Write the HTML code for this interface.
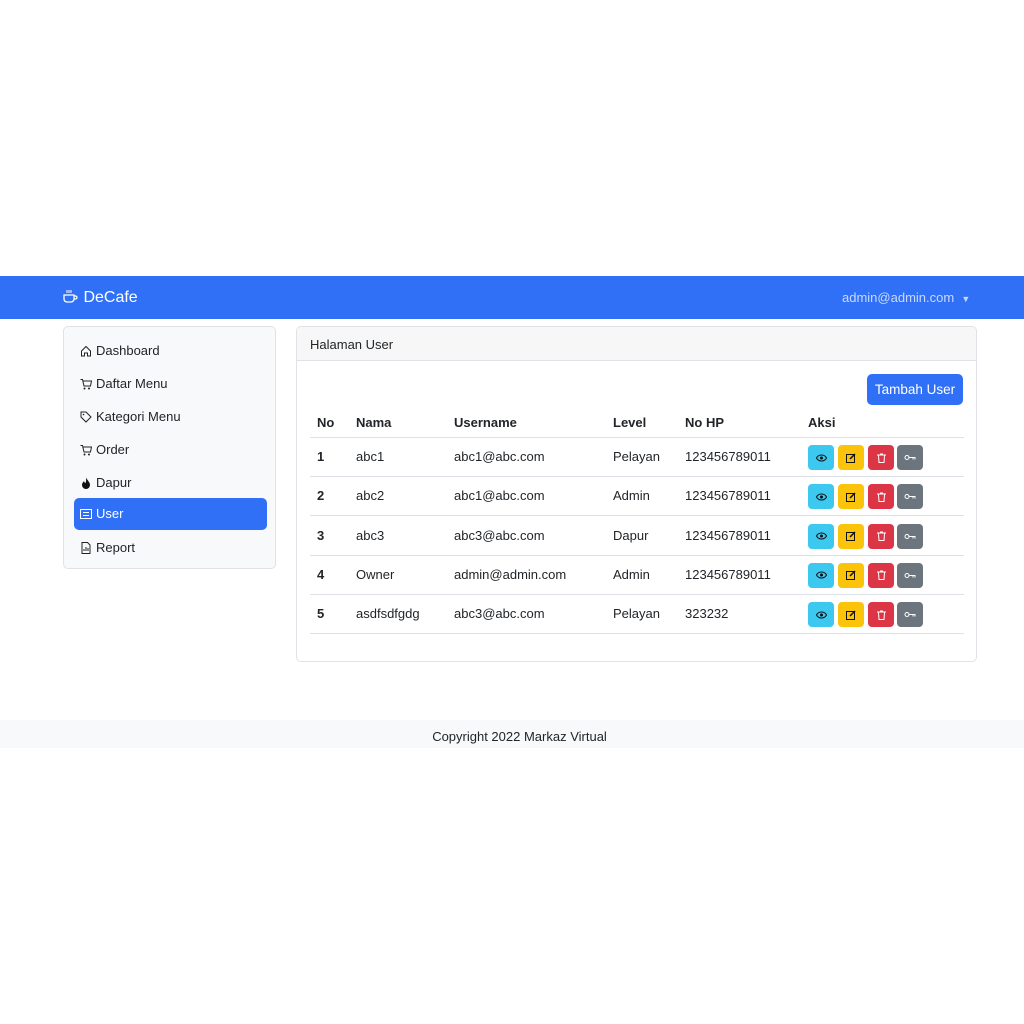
<!DOCTYPE html>
<html><head><style>
*{box-sizing:border-box;margin:0;padding:0}
body{width:1024px;height:1024px;background:#fff;font-family:"Liberation Sans",sans-serif;color:#212529;font-size:13px;position:relative;overflow:hidden}
.nav{position:absolute;left:0;top:276px;width:1024px;height:43px;background:#3070f7}
.brand{position:absolute;left:62px;top:12px;color:#fff;font-size:16px}
.user{position:absolute;left:842px;top:14px;color:#c9d9fd;font-size:13px}
.side{position:absolute;left:63px;top:326px;width:213px;height:243px;background:#f8f9fa;border:1px solid #dfe2e6;border-radius:5px}
.it{position:absolute;left:10px;width:193px;height:32px;padding-left:6px;line-height:32px;font-size:13px;display:flex;align-items:center;gap:4px}
.it.a{background:#3070f7;color:#fff;border-radius:5px}
.it svg{width:12px;height:12px}
.card{position:absolute;left:296px;top:326px;width:681px;height:336px;border:1px solid #dfe2e6;border-radius:5px;overflow:hidden}
.ch{height:34px;background:#f7f7f7;border-bottom:1px solid #dfe2e6;padding:10px 13px;font-size:13px}
.btn{position:absolute;left:570px;top:47px;width:96px;height:31px;background:#3070f7;color:#fff;border-radius:5px;text-align:center;line-height:31px;font-size:13.5px}
.row{position:absolute;left:13px;width:654px;border-bottom:1px solid #dee2e6;height:39px}
.row span{position:absolute;top:11px}
.h span{font-weight:bold}
.b{position:absolute;top:7px;width:26px;height:25px;border-radius:4px;display:flex;align-items:center;justify-content:center}
.foot{position:absolute;left:0;top:720px;width:1024px;height:28px;background:#f8f9fa;text-align:center;line-height:34px;font-size:13px;padding-left:15px}
</style></head><body>
<div class="nav"><div class="brand"><svg width="17" height="16" viewBox="0 0 17 16" style="vertical-align:-2px"><path d="M2 7h10v4a3 3 0 0 1-3 3H5a3 3 0 0 1-3-3z M12 8h1.5a1.5 1.5 0 0 1 0 3H12" fill="none" stroke="#fff" stroke-width="1.3"/><path d="M5 2v3M7 2v3M9 2v3" stroke="#fff" stroke-width="1"/></svg> DeCafe</div><div class="user">admin@admin.com &nbsp;<span style="font-size:9px">▼</span></div></div>
<div class="side">
<div class="it" style="top:8px"><svg viewBox="0 0 12 12"><path d="M1.5 6L6 1.5 10.5 6V11h-3V8h-3v3h-3z" fill="none" stroke="#222" stroke-width="1"/></svg>Dashboard</div>
<div class="it" style="top:41px"><svg viewBox="0 0 12 12"><path d="M0.5 1.5h2l1.5 6.5h6.5l1-5H3" fill="none" stroke="#222"/><circle cx="4.5" cy="10.5" r="1" fill="#222"/><circle cx="9" cy="10.5" r="1" fill="#222"/></svg>Daftar Menu</div>
<div class="it" style="top:74px"><svg viewBox="0 0 12 12"><path d="M1 1h5l5 5-5 5-5-5z" fill="none" stroke="#222"/><circle cx="3.5" cy="3.5" r=".8" fill="#222"/></svg>Kategori Menu</div>
<div class="it" style="top:107px"><svg viewBox="0 0 12 12"><path d="M0.5 1.5h2l1.5 6.5h6.5l1-5H3" fill="none" stroke="#222"/><circle cx="4.5" cy="10.5" r="1" fill="#222"/><circle cx="9" cy="10.5" r="1" fill="#222"/></svg>Order</div>
<div class="it" style="top:140px"><svg viewBox="0 0 12 12"><path d="M6 0.5C7 3 10 5 10 8a4 4 0 0 1-8 0c0-2 1.5-3 2-4 .5 1.5 1 2 1.5 2C6.5 4 6 2 6 .5z" fill="#111"/></svg>Dapur</div>
<div class="it a" style="top:171px"><svg viewBox="0 0 12 12"><rect x=".5" y="1.5" width="11" height="9" fill="none" stroke="#fff"/><path d="M3 4.5h6M3 7.5h6" stroke="#fff"/></svg>User</div>
<div class="it" style="top:205px"><svg viewBox="0 0 12 12"><path d="M2 .5h5.5l2.5 2.5v8.5H2z" fill="none" stroke="#222"/><path d="M4 9V7M6 9V5M8 9V6" stroke="#222"/></svg>Report</div>
</div>
<div class="card">
<div class="ch">Halaman User</div>
<div class="btn">Tambah User</div>
<div class="row h" style="top:83px;height:28px"><span style="left:7px;top:5px">No</span><span style="left:46px;top:5px">Nama</span><span style="left:144px;top:5px">Username</span><span style="left:303px;top:5px">Level</span><span style="left:375px;top:5px">No HP</span><span style="left:498px;top:5px">Aksi</span></div>
<div id="rows"></div>
</div>
<div class="foot">Copyright 2022 Markaz Virtual</div>
<script>
var d=[["1","abc1","abc1@abc.com","Pelayan","123456789011"],["2","abc2","abc1@abc.com","Admin","123456789011"],["3","abc3","abc3@abc.com","Dapur","123456789011"],["4","Owner","admin@admin.com","Admin","123456789011"],["5","asdfsdfgdg","abc3@abc.com","Pelayan","323232"]];
var h="";d.forEach(function(r,i){h+='<div class="row" style="top:'+(111+i*39.3)+'px"><span style="left:7px;font-weight:bold">'+r[0]+'</span><span style="left:46px">'+r[1]+'</span><span style="left:144px">'+r[2]+'</span><span style="left:303px">'+r[3]+'</span><span style="left:375px">'+r[4]+'</span>'+
'<div class="b" style="left:498px;background:#3dc8f0"><svg width="11" height="8" viewBox="0 0 11 8"><path d="M.5 4C2.5 0 8.5 0 10.5 4 8.5 8 2.5 8 .5 4z" fill="none" stroke="#111"/><circle cx="5.5" cy="4" r="1.5" fill="#111"/></svg></div>'+
'<div class="b" style="left:528px;background:#fbc40b"><svg width="10" height="10" viewBox="0 0 10 10"><rect x=".5" y="1.5" width="8" height="8" fill="none" stroke="#111"/><path d="M4 6L9 1" stroke="#111" stroke-width="1.5"/></svg></div>'+
'<div class="b" style="left:558px;background:#dc3545"><svg width="9" height="10" viewBox="0 0 9 10"><path d="M0 2h9M3 1h3M1.5 2.5l.5 7h5l.5-7" fill="none" stroke="#fff"/></svg></div>'+
'<div class="b" style="left:587px;background:#6c757d"><svg width="12" height="7" viewBox="0 0 12 7"><circle cx="3" cy="3.5" r="2" fill="none" stroke="#fff"/><path d="M5 3.5h6.5M9 3.5v2M11 3.5v2" stroke="#fff"/></svg></div></div>'});
document.getElementById("rows").innerHTML=h;
</script>
</body></html>
